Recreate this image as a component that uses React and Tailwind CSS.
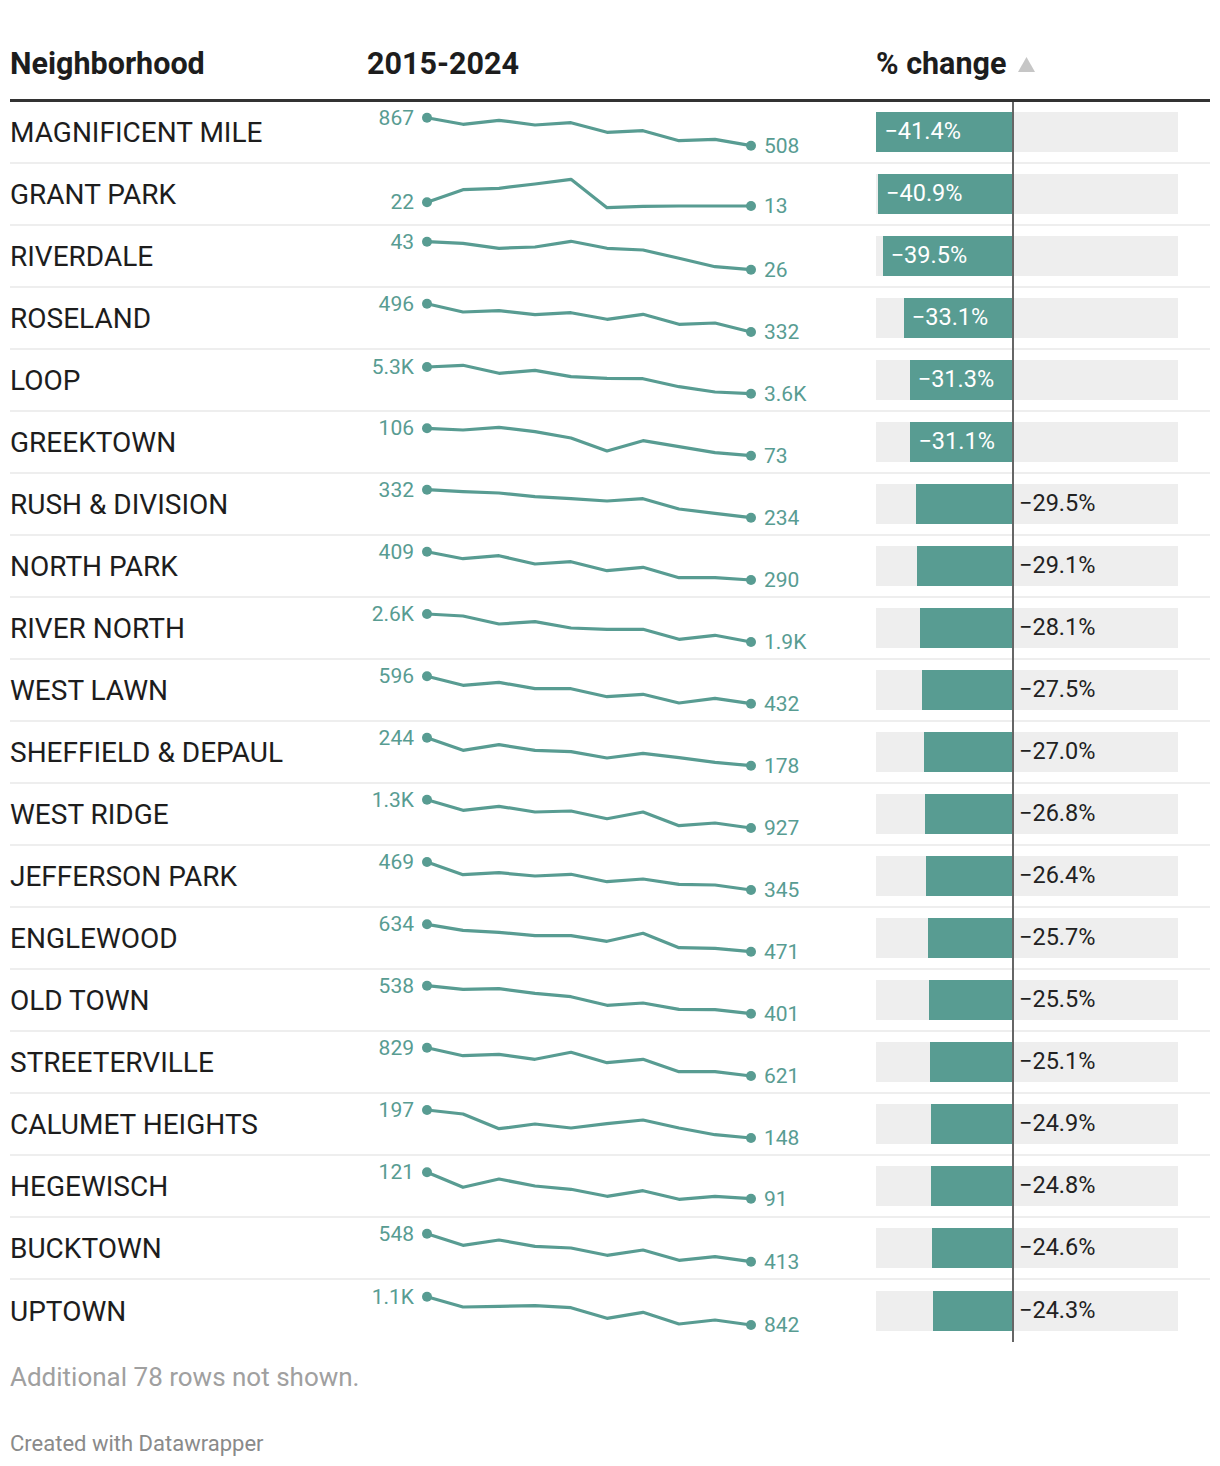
const TEAL = "#589c92";

const rows = [
  { name: "MAGNIFICENT MILE", from: "867", to: "508", pct: 41.4, ys: [15.7, 22.3, 18.3, 23, 20.7, 30.3, 28.7, 38.7, 37.3, 43.7] },
  { name: "GRANT PARK", from: "22", to: "13", pct: 40.9, ys: [38.3, 25.7, 24.3, 20, 15.3, 43.7, 42.3, 42, 42, 42] },
  { name: "RIVERDALE", from: "43", to: "26", pct: 39.5, ys: [15.7, 17.3, 22.3, 21, 15.3, 22.3, 24, 32.3, 40.7, 43.7] },
  { name: "ROSELAND", from: "496", to: "332", pct: 33.1, ys: [15.7, 24, 22.7, 26.7, 24.7, 31.3, 26.3, 36.3, 35, 44] },
  { name: "LOOP", from: "5.3K", to: "3.6K", pct: 31.3, ys: [17, 15.3, 23.3, 20.3, 26.7, 28.3, 28.7, 36.7, 42, 43.7] },
  { name: "GREEKTOWN", from: "106", to: "73", pct: 31.1, ys: [16.3, 18, 15.3, 19.7, 26, 39, 28.7, 34.7, 40.7, 43.7] },
  { name: "RUSH & DIVISION", from: "332", to: "234", pct: 29.5, ys: [15.7, 17.7, 19, 22.7, 24.7, 27, 24.7, 35, 39.3, 43.7] },
  { name: "NORTH PARK", from: "409", to: "290", pct: 29.1, ys: [15.7, 22.7, 19.7, 28, 25.7, 34.7, 31.3, 41.7, 41.7, 44] },
  { name: "RIVER NORTH", from: "2.6K", to: "1.9K", pct: 28.1, ys: [16, 18, 26, 23.7, 30, 31.3, 31.3, 41.3, 37.3, 44] },
  { name: "WEST LAWN", from: "596", to: "432", pct: 27.5, ys: [16.3, 25.3, 22.3, 28.7, 28.7, 36.7, 34.3, 43, 38.3, 43.7] },
  { name: "SHEFFIELD & DEPAUL", from: "244", to: "178", pct: 27.0, ys: [15.7, 28.3, 22.7, 28.3, 29.7, 36, 31.3, 35.7, 40.3, 43.7] },
  { name: "WEST RIDGE", from: "1.3K", to: "927", pct: 26.8, ys: [15.7, 26.3, 22.3, 28, 27, 34.7, 28, 41.7, 39, 44] },
  { name: "JEFFERSON PARK", from: "469", to: "345", pct: 26.4, ys: [16, 28.7, 26.7, 30, 28.3, 35.7, 33, 38.3, 39, 44] },
  { name: "ENGLEWOOD", from: "634", to: "471", pct: 25.7, ys: [16.3, 22.3, 24.3, 27.7, 27.7, 33.3, 25.3, 39.7, 40.3, 43.7] },
  { name: "OLD TOWN", from: "538", to: "401", pct: 25.5, ys: [15.7, 19.3, 18.7, 23.3, 26.7, 35.3, 33, 39.3, 39.7, 43.7] },
  { name: "STREETERVILLE", from: "829", to: "621", pct: 25.1, ys: [15.7, 23.7, 22.3, 27.3, 20.3, 30.7, 27.3, 39.7, 39.7, 44] },
  { name: "CALUMET HEIGHTS", from: "197", to: "148", pct: 24.9, ys: [16, 20, 34.7, 30, 34, 29.7, 26, 34, 40.7, 44] },
  { name: "HEGEWISCH", from: "121", to: "91", pct: 24.8, ys: [16.3, 31.3, 23, 30, 33.3, 40.3, 34.7, 43.3, 40.3, 42.7] },
  { name: "BUCKTOWN", from: "548", to: "413", pct: 24.6, ys: [15.7, 27.3, 22, 28.3, 30, 37.3, 32, 42.3, 38.7, 43.7] },
  { name: "UPTOWN", from: "1.1K", to: "842", pct: 24.3, ys: [15.7, 26, 25.3, 24.7, 26.7, 37.3, 31.3, 43, 39, 44] },
];

// px per percentage point on the bar scale
const SCALE = 3.3;

function Sparkline({ ys, from, to }) {
  const xs = ys.map((_, i) => 67 + 36 * i);
  const pts = ys.map((y, i) => `${xs[i]},${y}`).join(" ");
  const last = ys.length - 1;
  return (
    <svg width="506" height="60" className="block" style={{ fontFamily: "Roboto, sans-serif" }}>
      <polyline points={pts} fill="none" stroke={TEAL} strokeWidth="3.2" strokeLinejoin="round" />
      <circle cx={xs[0]} cy={ys[0]} r="5" fill={TEAL} />
      <circle cx={xs[last]} cy={ys[last]} r="5" fill={TEAL} />
      <text x="54" y={ys[0]} textAnchor="end" dominantBaseline="central" fontSize="21" fill={TEAL}>
        {from}
      </text>
      <text x="404" y={ys[last]} dominantBaseline="central" fontSize="21" fill={TEAL}>
        {to}
      </text>
    </svg>
  );
}

function Bar({ pct }) {
  const inside = pct > 30;
  const label = `\u2212${pct.toFixed(1)}%`;
  return (
    <div className="pl-[10px]">
      <div className="flex h-[40px] w-[302px] bg-[#eeeeee]">
        <div className="flex w-[137px] justify-end">
          <div
            className="flex h-full items-center bg-[#589c92] pl-[8px] text-[23.5px] text-white"
            style={{ width: pct * SCALE }}
          >
            {inside ? label : null}
          </div>
        </div>
        <div className="flex flex-1 items-center pl-[6px] text-[23.5px] text-[#222222]">
          {inside ? null : label}
        </div>
      </div>
    </div>
  );
}

export default function App() {
  return (
    <div className="w-[1220px] bg-white px-[10px] text-[#1d1d1d]" style={{ fontFamily: "Roboto, 'Liberation Sans', sans-serif" }}>
      <div className="flex h-[102px] items-center border-b-[3px] border-[#333333] pt-[28px] text-[30.5px] font-bold">
        <div className="w-[357px]">Neighborhood</div>
        <div className="w-[509px]">2015-2024</div>
        <div className="flex items-center gap-[12px]">
          <span>% change</span>
          <svg width="17" height="15" viewBox="0 0 17 15" className="mt-[1px]">
            <polygon points="8.5,0 17,15 0,15" fill="#c6c6c6" />
          </svg>
        </div>
      </div>

      <div className="relative">
        {rows.map((r, i) => (
          <div
            key={r.name}
            className={`flex h-[62px] items-center ${i < rows.length - 1 ? "border-b-2 border-[#eeeeee]" : "h-[60px]"}`}
          >
            <div className="w-[350px] pt-px text-[28px]">{r.name}</div>
            <div className="w-[506px]">
              <Sparkline ys={r.ys} from={r.from} to={r.to} />
            </div>
            <Bar pct={r.pct} />
          </div>
        ))}
        <div className="absolute bottom-0 left-[1002px] top-0 w-[2px] bg-[#666666]" />
      </div>

      <div className="mt-[20px] text-[26px] leading-[30px] text-[#a0a0a0]">Additional 78 rows not shown.</div>
      <div className="mt-[38px] pb-[20px] text-[22px] leading-[28px] text-[#8a8a8a]">Created with Datawrapper</div>
    </div>
  );
}
